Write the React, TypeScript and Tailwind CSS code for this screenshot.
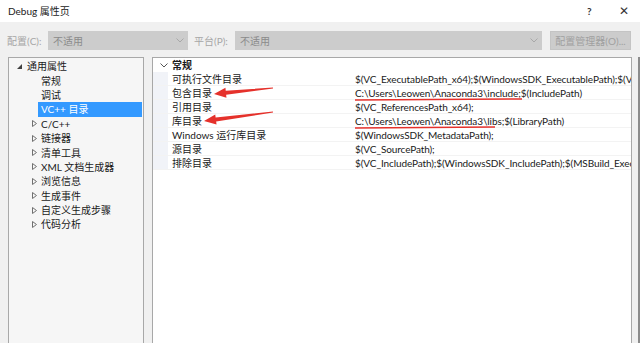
import React from 'react';

const font = { fontFamily: 'Lato, "Noto Sans CJK SC", sans-serif' };

const treeItems = ['C/C++', '链接器', '清单工具', 'XML 文档生成器', '浏览信息', '生成事件', '自定义生成步骤', '代码分析'];

const props = [
  { name: '可执行文件目录', value: '$(VC_ExecutablePath_x64);$(WindowsSDK_ExecutablePath);$(VS_ExecutablePath);$(MSBuild_ExecutablePath)' },
  { name: '包含目录', value: 'C:\\Users\\Leowen\\Anaconda3\\include;$(IncludePath)' },
  { name: '引用目录', value: '$(VC_ReferencesPath_x64);' },
  { name: '库目录', value: 'C:\\Users\\Leowen\\Anaconda3\\libs;$(LibraryPath)' },
  { name: 'Windows 运行库目录', value: '$(WindowsSDK_MetadataPath);' },
  { name: '源目录', value: '$(VC_SourcePath);' },
  { name: '排除目录', value: '$(VC_IncludePath);$(WindowsSDK_IncludePath);$(MSBuild_ExecutablePath);$(VC_LibraryPath_x64)' },
];

function Collapsed() {
  return (
    <svg width="5" height="7" viewBox="0 0 5 7" className="shrink-0">
      <path d="M0.5 0.5 L4.5 3.5 L0.5 6.5 Z" fill="none" stroke="#707070" strokeWidth="1" />
    </svg>
  );
}

function Expanded() {
  return (
    <svg width="5" height="5" viewBox="0 0 5 5" className="shrink-0">
      <path d="M5 0 L5 5 L0 5 Z" fill="#404040" />
    </svg>
  );
}

function Chevron({ color = '#a8a8a8' }: { color?: string }) {
  return (
    <svg width="8" height="5" viewBox="0 0 8 5">
      <path d="M0.5 0.5 L4 4 L7.5 0.5" fill="none" stroke={color} strokeWidth="1" />
    </svg>
  );
}

function Arrow({ x1, y1, x2, y2 }: { x1: number; y1: number; x2: number; y2: number }) {
  const dx = x2 - x1;
  const dy = y2 - y1;
  const len = Math.hypot(dx, dy);
  const ux = dx / len;
  const uy = dy / len;
  const nx = -uy;
  const ny = ux;
  const hb = { x: x2 - ux * 12, y: y2 - uy * 12 };
  const pts = [
    [x1 + nx * 0.5, y1 + ny * 0.5],
    [hb.x + nx * 2, hb.y + ny * 2],
    [hb.x + nx * 5, hb.y + ny * 5],
    [x2, y2],
    [hb.x - nx * 5, hb.y - ny * 5],
    [hb.x - nx * 2, hb.y - ny * 2],
    [x1 - nx * 0.5, y1 - ny * 0.5],
  ];
  return <polygon points={pts.map((p) => p.join(',')).join(' ')} fill="#e5312b" />;
}

export default function App() {
  return (
    <div className="relative w-[640px] h-[343px] overflow-hidden whitespace-nowrap bg-[#f0f0f0] text-[10px] leading-[14px] text-[#1a1a1a]" style={font}>
      {/* title bar */}
      <div className="flex h-[22px] items-center bg-white pl-[8px]">
        <span className="text-[#222]">Debug 属性页</span>
        <span className="ml-auto w-[10px] text-[10px] font-bold text-[#333]">?</span>
        <span className="ml-[22px] mr-[11px] text-[12px] leading-none text-[#333]">✕</span>
      </div>

      {/* config row */}
      <div className="mt-[9px] flex h-[19px] items-center">
        <span className="ml-[7px] w-[41px] text-[#a6a6a6]">配置(C):</span>
        <div className="flex h-[19px] w-[140px] items-center justify-between bg-[#cccccc] pl-[5px] pr-[4px] text-[#8a8a8a]">
          <span>不适用</span>
          <Chevron />
        </div>
        <span className="ml-[6px] w-[41px] text-[#a6a6a6]">平台(P):</span>
        <div className="flex h-[19px] w-[307px] items-center justify-between bg-[#cccccc] pl-[5px] pr-[4px] text-[#8a8a8a]">
          <span>不适用</span>
          <Chevron />
        </div>
        <div className="ml-[8px] flex h-[19px] w-[81px] items-center justify-center border border-[#c4c4c4] bg-[#cccccc] text-[#a0a0a0]">
          配置管理器(O)...
        </div>
      </div>

      {/* body */}
      <div className="mt-[7px] flex h-[300px]">
        {/* tree */}
        <div className="ml-[8px] w-[136px] border border-[#a8a8a8] bg-[#f6f6f6] pt-[1px]">
          <div className="flex h-[14.4px] items-center gap-[5px] pl-[8px]">
            <Expanded />
            <span>通用属性</span>
          </div>
          <div className="flex h-[14.4px] items-center pl-[32px]">常规</div>
          <div className="flex h-[14.4px] items-center pl-[32px]">调试</div>
          <div className="ml-[29px] mr-[1px] flex h-[14.4px] items-center bg-[#3399ff] pl-[3px] text-white">VC++ 目录</div>
          {treeItems.map((t) => (
            <div key={t} className="flex h-[14.4px] items-center gap-[4px] pl-[23px]">
              <Collapsed />
              <span>{t}</span>
            </div>
          ))}
        </div>

        {/* grid */}
        <div className="ml-[8px] w-[480px] overflow-hidden border border-[#a8a8a8] bg-white">
          <div className="flex h-[14px] items-center">
            <div className="flex w-[19px] justify-center pl-[2px]">
              <Chevron color="#555" />
            </div>
            <span className="font-bold">常规</span>
          </div>
          {props.map((p) => (
            <div key={p.name} className="flex h-[14px] items-center border-b border-[#f3f3f3]">
              <div className="h-full w-[15px] shrink-0 bg-[#f1f3f8]" />
              <span className="w-[187px] shrink-0 pl-[4px]">{p.name}</span>
              <span className="tracking-[-0.1px]">{p.value}</span>
            </div>
          ))}
        </div>
        <div className="ml-[6px] w-[2px] bg-[#8c8c8c]" />
      </div>

      {/* annotations */}
      <svg className="pointer-events-none absolute left-0 top-0" width="640" height="343">
        <Arrow x1={273} y1={88} x2={214} y2={94} />
        <Arrow x1={273} y1={112} x2={204} y2={121} />
        <line x1="355" y1="100" x2="522" y2="99" stroke="#e5312b" strokeWidth="1.5" />
        <line x1="355" y1="128" x2="495" y2="127" stroke="#e5312b" strokeWidth="1.5" />
      </svg>
    </div>
  );
}
